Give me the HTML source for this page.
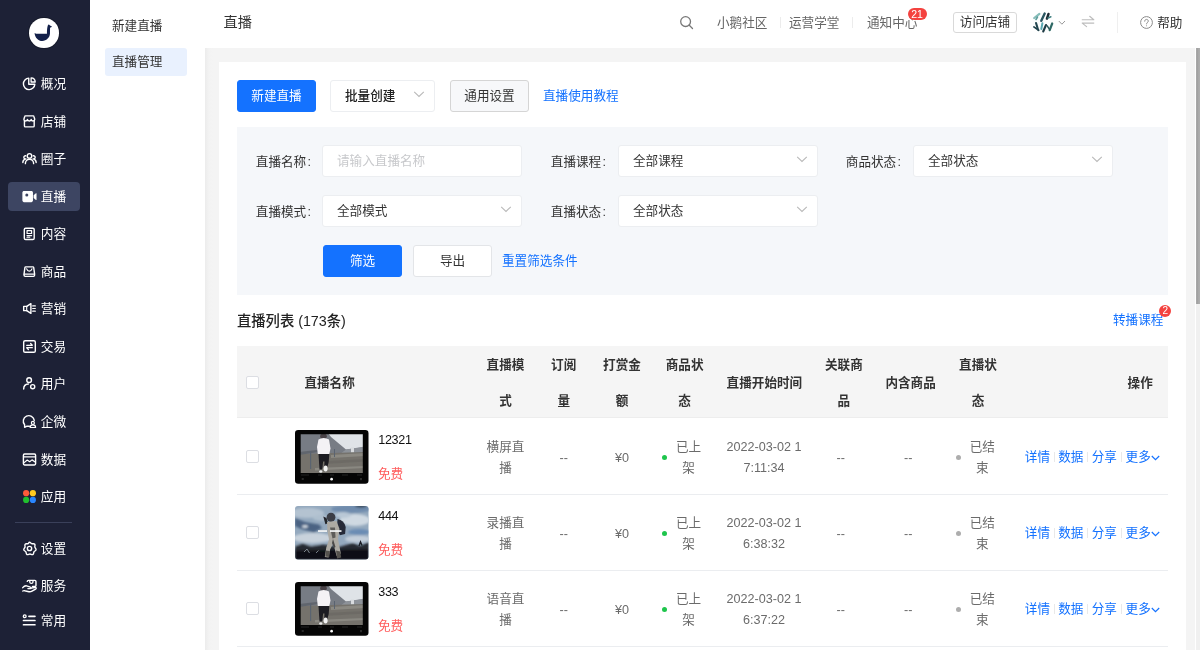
<!DOCTYPE html>
<html lang="zh-CN">
<head>
<meta charset="utf-8">
<title>直播</title>
<style>
*{box-sizing:border-box;margin:0;padding:0}
html,body{width:1200px;height:650px;overflow:hidden;background:#fff}
body{position:relative;will-change:transform;font-family:"Liberation Sans","Noto Sans CJK SC",sans-serif;font-size:12.6px;color:#333;line-height:1}
.abs{position:absolute}
/* sidebar */
#side{position:absolute;left:0;top:0;width:90px;height:650px;background:#1d2136}
#side .it{position:absolute;left:8px;width:72px;height:30px;border-radius:4px;color:#fff;font-size:12.700px}
#side .it.on::before{content:"";position:absolute;left:-.3px;top:.5px;width:72.300px;height:29px;border-radius:4px;background:#3d4562}
#side .it span{position:absolute;left:32.800px;top:.6px;line-height:30px;white-space:nowrap}
#side .it svg{position:absolute;left:13.7px;top:7.6px;width:15px;height:15px;fill:none;stroke:#fff;stroke-width:1.5;stroke-linecap:round;stroke-linejoin:round}
#side .hr{position:absolute;left:15px;width:57px;top:521.700px;height:1px;background:#3a405a}
/* sub nav */
#sub{position:absolute;left:90px;top:0;width:115px;height:650px;background:#fff}
#sub div{position:absolute;left:15px;width:82px;height:28px;line-height:28px;padding-left:7px;border-radius:3px;color:#333;white-space:nowrap}
#sub .on{background:#e9f1fe}
/* header */
#head{position:absolute;left:205px;top:0;width:995px;height:48px;background:#fff}
#head .t{position:absolute;top:0;line-height:46px;white-space:nowrap}
/* main */
#main{position:absolute;left:205px;top:47.700px;width:990px;height:603px;background:linear-gradient(90deg,#ececec 0,#f3f3f3 4px,#f4f4f4 8px)}
#sb{position:absolute;left:1195px;top:48px;width:5px;height:602px;background:linear-gradient(90deg,#fff 0,#fff 1px,#f0f0f0 1px)}
#sb i{position:absolute;left:1px;top:0;width:4px;height:256px;background:linear-gradient(90deg,#b0b0b0 0,#9f9f9f 1px,#adadad 3px)}
#card{position:absolute;left:14px;top:14.300px;width:967px;height:600px;background:#fff}
.btn{position:absolute;height:32px;line-height:31px;text-align:center;border-radius:3px;border:1px solid #d9d9d9;background:#fff;color:#333;white-space:nowrap}
.btn.pri{background:#1472ff;border-color:#1472ff;color:#fff}
.lnk{position:absolute;color:#1472ff;white-space:nowrap;margin-top:.5px}
.inp{position:absolute;width:200px;height:32px;line-height:31px;background:#fff;border:1px solid #eceef1;border-radius:3px;padding-left:14px;color:#333;white-space:nowrap}
.inp.ph{color:#c8c9cc}
.inp svg,.chev{position:absolute;right:9px;top:6.600px;width:12px;height:12px;fill:none;stroke:#b9b9b9;stroke-width:1.100}
#flt{position:absolute;left:18px;top:65px;width:931px;height:168px;background:#f5f7fa}
.lab{position:absolute;margin-top:.6px;line-height:32px;white-space:nowrap;color:#333}

#tbl{position:absolute;left:18px;top:284px;width:931px;height:400px}
.thd{position:absolute;left:0;top:0;width:931px;height:72px;background:#f5f5f5;border-bottom:1px solid #ededed}
.th{position:absolute;font-weight:700;color:#333;line-height:36px;text-align:center;white-space:nowrap}
.tr{position:absolute;left:0;width:931px;height:77px;border-bottom:1px solid #ebedf0}
.td{position:absolute;color:#6b6b6b;line-height:20.8px;text-align:center;white-space:nowrap}
.cb{position:absolute;width:13px;height:13px;border:1px solid #dcdee3;border-radius:2px;background:#fff}
.dot{position:absolute;top:37.3px;width:5px;height:5px;border-radius:50%}
.thumb{position:absolute;left:58.4px;top:11.7px}
.nm{position:absolute;left:141.3px;top:15.2px;line-height:14px;color:#111;white-space:nowrap;letter-spacing:-.35px}
.fr{position:absolute;left:141px;top:48.7px;line-height:14px;color:#ff5c5c;white-space:nowrap}
.ops span{position:absolute;top:32px;line-height:14px;color:#1472ff;white-space:nowrap}
.ops b{position:absolute;top:34px;width:1px;height:10px;background:#e9e9e9}
.ops svg{position:absolute;top:37px;fill:none;stroke:#1472ff;stroke-width:1.2}
</style>
</head>
<body>
<svg width="0" height="0" style="position:absolute">
<defs>
<filter id="bl3" x="-10%" y="-10%" width="120%" height="120%"><feGaussianBlur stdDeviation="0.35"/></filter>
<filter id="bl" x="-5%" y="-5%" width="110%" height="110%"><feGaussianBlur stdDeviation="0.55"/></filter>
<filter id="bl2" x="-5%" y="-5%" width="110%" height="110%"><feGaussianBlur stdDeviation="1.1"/></filter>
<clipPath id="cpa"><rect x="5.700" y="4.300" width="62.100" height="38.700"/></clipPath>
<clipPath id="cpb"><rect x="0" y="0" width="73.500" height="53.500" rx="3"/></clipPath>
</defs>
</svg>

<div id="side">
<div class="abs" style="left:29.300px;top:18.300px;width:29.400px;height:29.400px;border-radius:50%;background:#fff;box-shadow:0 0 0 1px #161a2b">
<svg viewBox="0 0 30 30" width="29.400" height="29.400" style="position:absolute;left:0;top:0"><path d="M5.700 15.200L7.200 16H18.300C18.300 12 18.600 9.200 19.200 7.600C19.600 6.500 20.600 6.400 21.100 7.300L23.600 8.900L21.500 9.900C21.300 12 21.600 14 21.400 16.200C21 20.500 17.700 23.400 13.600 23.400C9.500 23.400 6 20.200 5.700 15.200Z" fill="#13204a"/></svg>
</div>
<!-- 概况 -->
<div class="it" style="top:68px"><svg viewBox="0 0 16 16"><path d="M7.2 2.300A6.100 6.100 0 1 0 13.700 8.800H7.200z"/><path d="M9.700 2a4.600 4.600 0 0 1 4.400 4.400H9.700z" stroke-width="1.400"/></svg><span>概况</span></div>
<!-- 店铺 -->
<div class="it" style="top:106px"><svg viewBox="0 0 16 16"><path d="M2.600 7.300v5.400c0 .6.400 1 1 1h8.400c.6 0 1-.4 1-1V7.300"/><path d="M2 5.600l.9-3c.1-.4.400-.6.800-.6h8.200c.4 0 .7.200.8.600l.9 3c0 1.100-.9 1.800-1.900 1.800s-1.900-.7-1.900-1.700c0 1-.9 1.700-2 1.700s-2-.7-2-1.700c0 1-.8 1.700-1.900 1.700S2 6.700 2 5.600z"/></svg><span>店铺</span></div>
<!-- 圈子 -->
<div class="it" style="top:143px"><svg viewBox="0 0 16 16"><circle cx="8" cy="5.200" r="2.400"/><path d="M3.600 13.500c0-2.700 1.900-4.700 4.400-4.700s4.400 2 4.400 4.700"/><path d="M3.900 5.100a1.700 1.700 0 1 0 .3 3.300M.9 12.300c0-1.900 1-3.300 2.600-3.700M12.100 5.100a1.700 1.700 0 1 1-.3 3.300M15.100 12.300c0-1.900-1-3.300-2.600-3.700"/></svg><span>圈子</span></div>
<!-- 直播 -->
<div class="it on" style="top:181px"><svg viewBox="0 0 16 16"><path d="M2.100 2.200h7.900c.9 0 1.700.7 1.700 1.700v8.400c0 .9-.8 1.700-1.700 1.700H2.100c-.9 0-1.700-.8-1.700-1.700V3.900c0-1 .8-1.700 1.700-1.700zM12.400 6.600l2.400-2.100c.3-.2.700 0 .7.300v6.600c0 .4-.4.600-.7.300l-2.400-2.100z" fill="#fff" stroke="none"/><circle cx="5.100" cy="6.300" r="1.600" fill="#3d4562" stroke="none"/></svg><span>直播</span></div>
<!-- 内容 -->
<div class="it" style="top:218px"><svg viewBox="0 0 16 16"><rect x="2.450" y="2.350" width="10.550" height="12" rx="1.400"/><rect x="5.400" y="5" width="4.800" height="3" stroke-width="1.300"/><path d="M5.300 10.200h5M5.300 12h3" stroke-width="1.200"/></svg><span>内容</span></div>
<!-- 商品 -->
<div class="it" style="top:256px"><svg viewBox="0 0 16 16"><path d="M4 3.100h7.600c.5 0 .8.300.9.800l.9 6.600v1.500c0 .7-.5 1.200-1.200 1.200H3.400c-.7 0-1.200-.5-1.200-1.200v-1.500l.9-6.600c.1-.5.400-.8.900-.8z"/><path d="M2.300 10.800h11" stroke-width="1.200"/><path d="M5 5.200c.6 1.700 1.500 2.500 2.800 2.500s2.200-.8 2.800-2.500" stroke-width="1.300"/></svg><span>商品</span></div>
<!-- 营销 -->
<div class="it" style="top:293px"><svg viewBox="0 0 16 16"><path d="M1.800 5.700h3.200l4.500-2.900v10.400L5 10.300H1.800z"/><path d="M5 5.700v4.600" stroke-width="1.200"/><path d="M11.400 5.200h2.800M11.400 8h2.800M11.400 10.800h2.800" stroke-width="1.300"/></svg><span>营销</span></div>
<!-- 交易 -->
<div class="it" style="top:331px"><svg viewBox="0 0 16 16"><rect x="1.800" y="1.800" width="12.400" height="12.400" rx="1.500"/><path d="M5 6.700h6L9.200 4.800M11 9.300H5l1.800 1.900" stroke-width="1.300"/></svg><span>交易</span></div>
<!-- 用户 -->
<div class="it" style="top:368px"><svg viewBox="0 0 16 16"><circle cx="7.600" cy="4.400" r="2.500"/><path d="M1.800 13.800c0-3 2.100-5.100 5-5.300"/><circle cx="11.400" cy="11.400" r="2.200"/></svg><span>用户</span></div>
<!-- 企微 -->
<div class="it" style="top:406px"><svg viewBox="0 0 16 16"><path d="M8 13H5.300l-2.500 1.200v-2.700A5.900 5.900 0 1 1 13.100 6.800"/><circle cx="11.600" cy="9.500" r="1.600" stroke-width="1.300"/><path d="M8.700 14.400c0-1.700 1.100-2.800 2.900-2.800s2.900 1.100 2.900 2.800z" stroke-width="1.300"/></svg><span>企微</span></div>
<!-- 数据 -->
<div class="it" style="top:444px"><svg viewBox="0 0 16 16"><rect x="1.500" y="2.200" width="13" height="11.600" rx="1.200"/><path d="M1.800 5.300h12.400" stroke-width="1.300"/><path d="M2 11.600l3.600-3 2.600 1.800 2.500-2 3.300 2.200" stroke-width="1.300"/></svg><span>数据</span></div>
<!-- 应用 -->
<div class="it" style="top:481px"><svg viewBox="0 0 16 16" style="stroke:none"><circle cx="4.400" cy="4.400" r="3.300" fill="#ff5b3a"/><circle cx="11.600" cy="4.400" r="3.300" fill="#ffc91f"/><circle cx="4.400" cy="11.600" r="3.300" fill="#21c02e"/><circle cx="11.600" cy="11.600" r="3.300" fill="#2a86ff"/></svg><span>应用</span></div>
<div class="hr"></div>
<!-- 设置 -->
<div class="it" style="top:533px"><svg viewBox="0 0 16 16"><path d="M8 1.300c1.100 0 1.500 1.300 2.600 1.600s2.200-.5 3 .6-.2 2 .1 3.100 1.600 1.600 1.300 2.800-1.600 1.200-2.200 2.200-.1 2.300-1.300 2.800-1.800-.6-3-.6-2 1.100-3.100.6-.7-1.800-1.300-2.800-1.900-1-2.200-2.200.9-1.700 1.300-2.800-.6-2.100.1-3.100 1.900-.3 3-.6S6.900 1.300 8 1.300z" stroke-width="1.500"/><circle cx="8" cy="8" r="2.300" stroke-width="1.500"/></svg><span>设置</span></div>
<!-- 服务 -->
<div class="it" style="top:570px"><svg viewBox="0 0 16 16"><path d="M5.600 3.600c.1-.7.600-1.100 1.300-1.100h6.800c.7 0 1.200.5 1.200 1.200v4.200c0 .7-.5 1.200-1.200 1.200h-2.500" stroke-width="1.500"/><path d="M8.300 2.700v1.500c0 1 .7 1.600 1.700 1.600s1.700-.6 1.700-1.600V2.700" stroke-width="1.400"/><path d="M.8 10.300c1.400-1.700 3-2.400 4.900-1.700l3.200 1.100c1 .3 1 1.600-.1 1.600H6.300" stroke-width="1.500"/><path d="M9.700 10.800l3.900-.7c1.500-.3 2 1 .9 1.700l-4.300 2.500c-.9.500-1.800.5-2.800.3l-4.500-1c-.7-.2-1.400-.1-2 .3" stroke-width="1.500"/></svg><span>服务</span></div>
<!-- 常用 -->
<div class="it" style="top:605px"><svg viewBox="0 0 16 16"><circle cx="2.900" cy="3.500" r="1.500" stroke-width="1.400"/><path d="M7.400 3.500h6.400M1.600 8h12.200M1.600 12.500h12.200" stroke-width="1.800"/></svg><span>常用</span></div>
</div>
<div id="sub"><div style="top:12px">新建直播</div><div class="on" style="top:48px">直播管理</div></div>
<div id="head">
<div class="t" style="left:18.600px;font-size:14.200px;color:#333;line-height:44px">直播</div>
<svg class="abs" style="left:474px;top:15px" width="15" height="15" viewBox="0 0 15 15" fill="none" stroke="#777" stroke-width="1.300" stroke-linecap="round"><circle cx="6.600" cy="6.600" r="4.900"/><path d="M10.300 10.300l3.200 3.200"/></svg>
<div class="t" style="left:512px;color:#666">小鹅社区</div>
<div class="abs" style="left:575px;top:17px;width:1px;height:11px;background:#ececec"></div>
<div class="t" style="left:584px;color:#666">运营学堂</div>
<div class="abs" style="left:647px;top:17px;width:1px;height:11px;background:#ececec"></div>
<div class="t" style="left:662px;color:#666">通知中心</div>
<div class="abs" style="left:702.600px;top:8.300px;width:19px;height:11.500px;border-radius:6px;background:#f4423f;color:#fff;font-size:10.500px;line-height:12px;text-align:center">21</div>
<div class="abs" style="left:748px;top:11.500px;width:64px;height:21.500px;border:1px solid #d9d9d9;border-radius:3px;line-height:19.500px;text-align:center;color:#333">访问店铺</div>
<svg class="abs" style="left:826.500px;top:11.500px" width="22" height="22" viewBox="0 0 22 22"><circle cx="11" cy="11" r="10.300" fill="#fcfdfd"/><g stroke-linecap="round" fill="none" filter="url(#bl3)"><path d="M2.200 6L7.400 1.900" stroke="#86bdb9" stroke-width="2.200"/><path d="M4 7.500l1.500-2.500" stroke="#5b9c9b" stroke-width="1.600"/><path d="M9.300 8.800L12.700 1.600" stroke="#2a5560" stroke-width="2.400"/><path d="M14.900 6.700L16.500 2" stroke="#1b2a33" stroke-width="2.400"/><path d="M16 6l2.900-1.200" stroke="#3f7f80" stroke-width="1.500"/><path d="M1.900 14.900L6.700 18.300" stroke="#1f3f48" stroke-width="1.700"/><path d="M4 10.900L6 17.600" stroke="#22454f" stroke-width="2"/><path d="M10.400 11.200L9.300 17" stroke="#5aa9b2" stroke-width="2"/><path d="M14 13L11.200 19.500" stroke="#1f3b45" stroke-width="2.100"/><path d="M20.200 11.500L17.700 18.200" stroke="#2f6a66" stroke-width="2.200"/><path d="M15.200 13.800l2.500 3.800" stroke="#2a5a5c" stroke-width="1.500"/></g></svg>
<svg class="abs" style="left:853px;top:19.500px" width="8" height="6" viewBox="0 0 8 6" fill="none" stroke="#999" stroke-width="1"><path d="M.8 1l3.100 3.200L7 1"/></svg>
<svg class="abs" style="left:876px;top:15px" width="14" height="13" viewBox="0 0 14 13" fill="none" stroke="#bdbdbd" stroke-width="1.150" stroke-linecap="round" stroke-linejoin="round"><path d="M1.200 4.700h11.600L8.700 1.300M12.800 8.100H1.200l4.400 3.500"/></svg>
<div class="abs" style="left:911.500px;top:12px;width:1px;height:21px;background:#efefef"></div>
<svg class="abs" style="left:935px;top:16px" width="13" height="13" viewBox="0 0 13 13" fill="none" stroke="#8a8a8a" stroke-width="1"><circle cx="6.500" cy="6.500" r="5.900"/><path d="M4.700 5.200c0-1.100.8-1.800 1.800-1.800s1.800.7 1.800 1.700c0 1.300-1.800 1.400-1.800 2.800" stroke-linecap="round"/><circle cx="6.500" cy="9.700" r=".5" fill="#8a8a8a" stroke="none"/></svg>
<div class="t" style="left:952.200px;color:#333">帮助</div>
</div>
<div id="sb"><i></i></div>
<div id="main"><div id="card">
<!-- coordinates inside #card: page x-219, page y-62 -->
<div class="btn pri" style="left:18px;top:18px;width:79px">新建直播</div>
<div class="inp" style="left:111px;top:18px;width:105px;font-weight:500;color:#222">批量创建<svg viewBox="0 0 12 12"><path d="M1.200 3.800L6 8.400l4.800-4.600"/></svg></div>
<div class="btn" style="left:231px;top:18px;width:79px;background:#f7f8fa;border-color:#d5d5d5">通用设置</div>
<div class="lnk" style="left:324px;top:18px;line-height:32px">直播使用教程</div>
<div id="flt">
<div class="lab" style="left:18.800px;top:18px">直播名称<span style="margin-left:1.300px">:</span></div>
<div class="inp ph" style="left:85px;top:18px">请输入直播名称</div>
<div class="lab" style="left:313.800px;top:18px">直播课程<span style="margin-left:1.300px">:</span></div>
<div class="inp" style="left:381px;top:18px">全部课程<svg viewBox="0 0 12 12"><path d="M1.200 3.800L6 8.400l4.800-4.600"/></svg></div>
<div class="lab" style="left:608.800px;top:18px">商品状态<span style="margin-left:1.300px">:</span></div>
<div class="inp" style="left:676px;top:18px">全部状态<svg viewBox="0 0 12 12"><path d="M1.200 3.800L6 8.400l4.800-4.600"/></svg></div>
<div class="lab" style="left:18.800px;top:68px">直播模式<span style="margin-left:1.300px">:</span></div>
<div class="inp" style="left:85px;top:68px">全部模式<svg viewBox="0 0 12 12"><path d="M1.200 3.800L6 8.400l4.800-4.600"/></svg></div>
<div class="lab" style="left:313.800px;top:68px">直播状态<span style="margin-left:1.300px">:</span></div>
<div class="inp" style="left:381px;top:68px">全部状态<svg viewBox="0 0 12 12"><path d="M1.200 3.800L6 8.400l4.800-4.600"/></svg></div>
<div class="btn pri" style="left:86px;top:118px;width:79px">筛选</div>
<div class="btn" style="left:176px;top:118px;width:79px;border-color:#e3e5e8">导出</div>
<div class="lnk" style="left:265px;top:118px;line-height:32px">重置筛选条件</div>
</div>
<div class="abs" style="left:18px;top:251.500px;font-size:14.300px;line-height:16px;color:#222;font-weight:500;white-space:nowrap">直播列表 (173条)</div>
<div id="tbl">
<div class="thd">
<i class="cb" style="left:9px;top:30px"></i>
<div class="th" style="left:67.4px;top:18.7px;text-align:left;width:80px"><div>直播名称</div></div>
<div class="th" style="left:228.5px;top:0.7000000000000028px;width:80px"><div>直播模</div><div>式</div></div>
<div class="th" style="left:286.7px;top:0.7000000000000028px;width:80px"><div>订阅</div><div>量</div></div>
<div class="th" style="left:345.0px;top:0.7000000000000028px;width:80px"><div>打赏金</div><div>额</div></div>
<div class="th" style="left:407.6px;top:0.7000000000000028px;width:80px"><div>商品状</div><div>态</div></div>
<div class="th" style="left:477.4px;top:18.700000000000003px;width:100px"><div>直播开始时间</div></div>
<div class="th" style="left:566.9px;top:0.7000000000000028px;width:80px"><div>关联商</div><div>品</div></div>
<div class="th" style="left:633.6px;top:18.700000000000003px;width:80px"><div>内含商品</div></div>
<div class="th" style="left:701.0px;top:0.7000000000000028px;width:80px"><div>直播状</div><div>态</div></div>
<div class="th" style="left:835.8px;top:18.7px;text-align:right;width:80px"><div>操作</div></div>
</div>
<div class="tr" style="top:72px">
<i class="cb" style="left:9px;top:32px"></i>
<svg class="thumb" width="74" height="54" viewBox="0 0 74 54"><g>
<rect x="0" y="0" width="73.500" height="53.700" rx="3.200" fill="#050505"/>
<g clip-path="url(#cpa)"><g filter="url(#bl)">
<rect x="4" y="3" width="66" height="42" fill="#777b84"/>
<polygon points="33,3 70,3 70,17 51,19.500 36,7" fill="#dfe3e7"/>
<polygon points="51,19.500 70,16.500 70,24 45,24" fill="#8d9299"/>
<rect x="56" y="17.500" width="3" height="5" fill="#d8dbde"/>
<polygon points="4,24 70,22 70,45 4,45" fill="#74726c"/>
<polygon points="4,22 30,19 30,21 4,25" fill="#61656d"/>
<polygon points="36,25 70,23 70,26 36,28" fill="#8b8982"/>
<polygon points="30,31 70,29 70,31.500 30,34" fill="#6d6b65"/>
<polygon points="20,38 70,36 70,38 20,40.500" fill="#8a8881"/>
<rect x="15" y="21" width="1.200" height="18" fill="#5a6470"/>
<rect x="39" y="19" width="1" height="8" fill="#5a6470"/>
<ellipse cx="28.500" cy="6.200" rx="3.300" ry="2.600" fill="#4a4346"/>
<path d="M23.500 9.500q5-3 10.500 0l1.500 9-1.200 5.500h-11.500l-.8-7z" fill="#f4f2f5"/>
<path d="M23.500 24h10.800l-.6 8-2 7.500h-2.600l.4-8-1.400 0-.8 8h-2.800z" fill="#1d1c20"/>
<ellipse cx="30.600" cy="38.400" rx="2" ry="3" fill="#f3f3f3"/>
<ellipse cx="25.800" cy="41.500" rx="1.600" ry="1.200" fill="#e8e8e8"/>
</g></g>
<circle cx="36.600" cy="49.200" r="1.350" fill="#fff"/>
<g fill="#2b2b2b"><rect x="6" y="44.600" width="8" height=".8"/><rect x="23" y="44.600" width="4" height=".8"/><rect x="35" y="44.600" width="4" height=".8"/><rect x="47" y="44.600" width="6" height=".8"/><rect x="62" y="44.600" width="5" height=".8"/><rect x="6.500" y="48" width="2.500" height="2" rx="1"/><rect x="65" y="48" width="2" height="2.200"/></g>
</g></svg>
<div class="nm">12321</div><div class="fr">免费</div>
<div class="td" style="left:223.5px;top:19.3px;width:90px"><div>横屏直</div><div>播</div></div>
<div class="td" style="left:281.8px;top:29.7px;width:90px"><div>--</div></div>
<div class="td" style="left:340.0px;top:29.7px;width:90px"><div>¥0</div></div>
<i class="dot" style="left:425.3px;background:#1ec54c"></i>
<div class="td" style="left:406.6px;top:19.3px;width:90px"><div>已上</div><div>架</div></div>
<div class="td" style="left:477.0px;top:19.3px;width:100px"><div>2022-03-02 1</div><div>7:11:34</div></div>
<div class="td" style="left:558.8px;top:29.7px;width:90px"><div>--</div></div>
<div class="td" style="left:626.3px;top:29.7px;width:90px"><div>--</div></div>
<i class="dot" style="left:718.8px;background:#adadad"></i>
<div class="td" style="left:700.3px;top:19.3px;width:90px"><div>已结</div><div>束</div></div>
<div class="ops"><span style="left:787.8px">详情</span><b style="left:816.5px"></b><span style="left:821.2px">数据</span><b style="left:850.3px"></b><span style="left:854.7px">分享</span><b style="left:884.2px"></b><span style="left:888.6px">更多</span><svg style="left:914.4px" width="9" height="6" viewBox="0 0 9 6"><path d="M.8 1l3.700 3.600L8.200 1"/></svg></div>
</div>
<div class="tr" style="top:148px">
<i class="cb" style="left:9px;top:32px"></i>
<svg class="thumb" width="74" height="54" viewBox="0 0 74 54"><g>
<g clip-path="url(#cpb)">
<rect x="0" y="0" width="74" height="54" fill="#94a9be"/>
<g filter="url(#bl2)">
<ellipse cx="12" cy="7" rx="17" ry="5" fill="#b4c3d1"/>
<ellipse cx="56" cy="3" rx="20" ry="4" fill="#6f8cad"/>
<ellipse cx="66" cy="0" rx="6" ry="1.500" fill="#2c3a4c"/>
<ellipse cx="60" cy="14" rx="15" ry="6" fill="#cfd9e2"/>
<ellipse cx="48" cy="9" rx="8" ry="3" fill="#b9c8d6"/>
<ellipse cx="64" cy="26" rx="11" ry="3" fill="#6b8cb4"/>
<ellipse cx="63" cy="33" rx="13" ry="3.500" fill="#c3ceda"/>
<ellipse cx="18" cy="32" rx="20" ry="5" fill="#c8d2dc"/>
<ellipse cx="26" cy="12" rx="8" ry="3" fill="#aebfce"/>
<ellipse cx="12" cy="40" rx="16" ry="2.500" fill="#9fb2c4"/>
<polygon points="0,12 10,16 24,18.500 27,22 19,26.500 6,23 0,20" fill="#4b6383"/>
<ellipse cx="10" cy="20.500" rx="3" ry="1.300" fill="#e3e9ee"/>
<polygon points="0,40 8,37.500 16,40 28,38.500 44,41 58,37 65,40 74,36 74,54 0,54" fill="#252932"/>
<polygon points="0,44.500 74,43.500 74,54 0,54" fill="#0f1116"/>
</g>
<g filter="url(#bl)">
<ellipse cx="36" cy="11.300" rx="4.400" ry="4.600" fill="#3a3d44"/>
<path d="M28.300 10.500l3.200 1.500 1.500 5.200-2.600 1z" fill="#24262c"/>
<path d="M42.500 13q6.500 1 8.200 8l-.6 7-5.200 1.200-3-6.200z" fill="#272b38"/>
<path d="M32 16l9.500-1 3 8-1.500 10 1.200 6 1.600 8.500-4.200 2.500-2-7.500-1.500-5-3 6-1.500 8-3.800-.5 1.500-9.500 2.700-8-1.500-8z" fill="#adaaa3"/>
<path d="M35 21.500l5 0 .5 10-3 1z" fill="#5d5c5a"/>
<path d="M38 33l2.500 8-1.500 1-2-5z" fill="#4b4a48"/>
<path d="M30.800 44.500l4 .5-.5 6-4-.5zM41 44.500l4.200 1 1 6-4.200 1z" fill="#55534f"/>
<rect x="23" y="24.200" width="9" height="1.700" fill="#f3f5f7"/><rect x="35" y="24.200" width="11.500" height="1.700" fill="#f3f5f7"/>
<path d="M9 46l3-3 2.500 4M21 47l2.500-2.500" stroke="#858f99" stroke-width=".9" fill="none"/>
<path d="M64 40l1.500-4 1.500 3.500" stroke="#1b1e25" stroke-width="1.400" fill="none"/>
</g>
</g>
</g></svg>
<div class="nm">444</div><div class="fr">免费</div>
<div class="td" style="left:223.5px;top:19.3px;width:90px"><div>录播直</div><div>播</div></div>
<div class="td" style="left:281.8px;top:29.7px;width:90px"><div>--</div></div>
<div class="td" style="left:340.0px;top:29.7px;width:90px"><div>¥0</div></div>
<i class="dot" style="left:425.3px;background:#1ec54c"></i>
<div class="td" style="left:406.6px;top:19.3px;width:90px"><div>已上</div><div>架</div></div>
<div class="td" style="left:477.0px;top:19.3px;width:100px"><div>2022-03-02 1</div><div>6:38:32</div></div>
<div class="td" style="left:558.8px;top:29.7px;width:90px"><div>--</div></div>
<div class="td" style="left:626.3px;top:29.7px;width:90px"><div>--</div></div>
<i class="dot" style="left:718.8px;background:#adadad"></i>
<div class="td" style="left:700.3px;top:19.3px;width:90px"><div>已结</div><div>束</div></div>
<div class="ops"><span style="left:787.8px">详情</span><b style="left:816.5px"></b><span style="left:821.2px">数据</span><b style="left:850.3px"></b><span style="left:854.7px">分享</span><b style="left:884.2px"></b><span style="left:888.6px">更多</span><svg style="left:914.4px" width="9" height="6" viewBox="0 0 9 6"><path d="M.8 1l3.700 3.600L8.200 1"/></svg></div>
</div>
<div class="tr" style="top:224px">
<i class="cb" style="left:9px;top:32px"></i>
<svg class="thumb" width="74" height="54" viewBox="0 0 74 54"><g>
<rect x="0" y="0" width="73.500" height="53.700" rx="3.200" fill="#050505"/>
<g clip-path="url(#cpa)"><g filter="url(#bl)">
<rect x="4" y="3" width="66" height="42" fill="#777b84"/>
<polygon points="33,3 70,3 70,17 51,19.500 36,7" fill="#dfe3e7"/>
<polygon points="51,19.500 70,16.500 70,24 45,24" fill="#8d9299"/>
<rect x="56" y="17.500" width="3" height="5" fill="#d8dbde"/>
<polygon points="4,24 70,22 70,45 4,45" fill="#74726c"/>
<polygon points="4,22 30,19 30,21 4,25" fill="#61656d"/>
<polygon points="36,25 70,23 70,26 36,28" fill="#8b8982"/>
<polygon points="30,31 70,29 70,31.500 30,34" fill="#6d6b65"/>
<polygon points="20,38 70,36 70,38 20,40.500" fill="#8a8881"/>
<rect x="15" y="21" width="1.200" height="18" fill="#5a6470"/>
<rect x="39" y="19" width="1" height="8" fill="#5a6470"/>
<ellipse cx="28.500" cy="6.200" rx="3.300" ry="2.600" fill="#4a4346"/>
<path d="M23.500 9.500q5-3 10.500 0l1.500 9-1.200 5.500h-11.500l-.8-7z" fill="#f4f2f5"/>
<path d="M23.500 24h10.800l-.6 8-2 7.500h-2.600l.4-8-1.400 0-.8 8h-2.800z" fill="#1d1c20"/>
<ellipse cx="30.600" cy="38.400" rx="2" ry="3" fill="#f3f3f3"/>
<ellipse cx="25.800" cy="41.500" rx="1.600" ry="1.200" fill="#e8e8e8"/>
</g></g>
<circle cx="36.600" cy="49.200" r="1.350" fill="#fff"/>
<g fill="#2b2b2b"><rect x="6" y="44.600" width="8" height=".8"/><rect x="23" y="44.600" width="4" height=".8"/><rect x="35" y="44.600" width="4" height=".8"/><rect x="47" y="44.600" width="6" height=".8"/><rect x="62" y="44.600" width="5" height=".8"/><rect x="6.500" y="48" width="2.500" height="2" rx="1"/><rect x="65" y="48" width="2" height="2.200"/></g>
</g></svg>
<div class="nm">333</div><div class="fr">免费</div>
<div class="td" style="left:223.5px;top:19.3px;width:90px"><div>语音直</div><div>播</div></div>
<div class="td" style="left:281.8px;top:29.7px;width:90px"><div>--</div></div>
<div class="td" style="left:340.0px;top:29.7px;width:90px"><div>¥0</div></div>
<i class="dot" style="left:425.3px;background:#1ec54c"></i>
<div class="td" style="left:406.6px;top:19.3px;width:90px"><div>已上</div><div>架</div></div>
<div class="td" style="left:477.0px;top:19.3px;width:100px"><div>2022-03-02 1</div><div>6:37:22</div></div>
<div class="td" style="left:558.8px;top:29.7px;width:90px"><div>--</div></div>
<div class="td" style="left:626.3px;top:29.7px;width:90px"><div>--</div></div>
<i class="dot" style="left:718.8px;background:#adadad"></i>
<div class="td" style="left:700.3px;top:19.3px;width:90px"><div>已结</div><div>束</div></div>
<div class="ops"><span style="left:787.8px">详情</span><b style="left:816.5px"></b><span style="left:821.2px">数据</span><b style="left:850.3px"></b><span style="left:854.7px">分享</span><b style="left:884.2px"></b><span style="left:888.6px">更多</span><svg style="left:914.4px" width="9" height="6" viewBox="0 0 9 6"><path d="M.8 1l3.700 3.600L8.200 1"/></svg></div>
</div>
</div>
<div class="lnk" style="left:894px;top:249.800px;line-height:16px">转播课程</div>
<div class="abs" style="left:940.300px;top:242.600px;width:12px;height:12px;border-radius:6px;background:#f4423f;color:#fff;font-size:10px;line-height:12px;text-align:center">2</div>
</div></div>
</body>
</html>
